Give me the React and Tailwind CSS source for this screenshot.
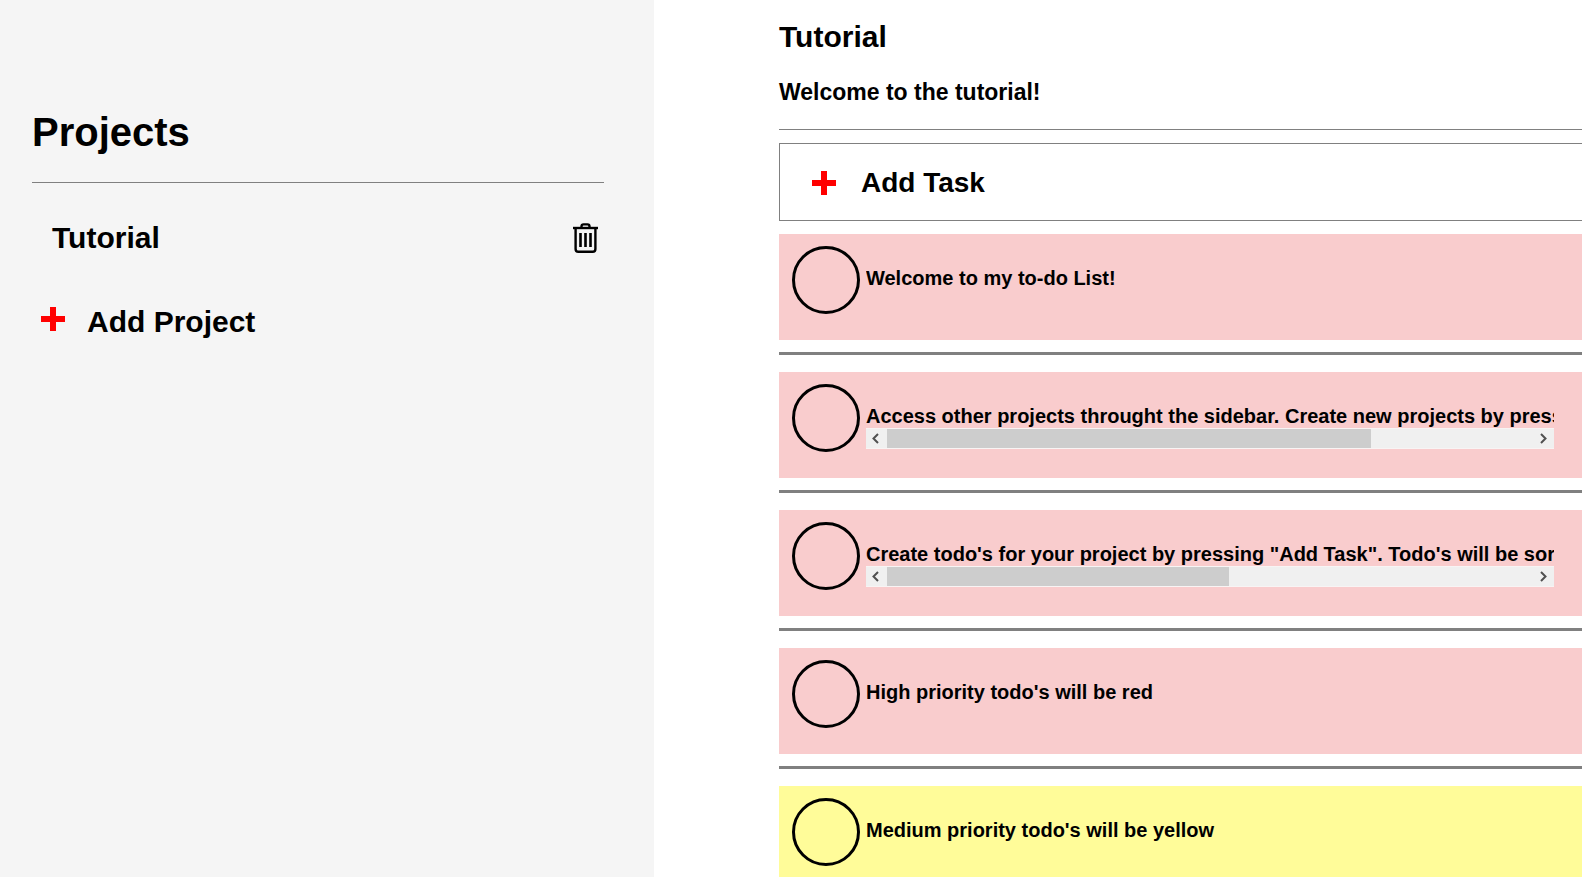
import { useRef } from "react";

const tasks = [
  { id: "welcome", title: "Welcome to my to-do List!", priority: "high" },
  {
    id: "sidebar",
    title: 'Access other projects throught the sidebar. Create new projects by pressing "Add Project".',
    priority: "high",
    thumb: 75,
  },
  {
    id: "create",
    title: 'Create todo\'s for your project by pressing "Add Task". Todo\'s will be sorted by priority.',
    priority: "high",
    thumb: 53,
  },
  { id: "red", title: "High priority todo's will be red", priority: "high" },
  { id: "yellow", title: "Medium priority todo's will be yellow", priority: "medium" },
];

const priorityColor = {
  high: "bg-[#f9cccd]",
  medium: "bg-[#fffc99]",
};

function PlusIcon({ className }) {
  return (
    <svg className={className} width="24" height="24" viewBox="0 0 24 24" stroke="#ff0000" strokeWidth="6" aria-hidden="true">
      <path d="M12 0V24M0 12H24" />
    </svg>
  );
}

function TrashIcon() {
  return (
    <svg width="25" height="30" viewBox="0 0 25 30" fill="none" stroke="black" aria-hidden="true">
      <path d="M0 5H25" strokeWidth="2.4" />
      <path d="M8.5 4.5V3.4Q8.5 1.4 10.5 1.4H14.5Q16.5 1.4 16.5 3.4V4.5" strokeWidth="2.4" />
      <path d="M2.6 5V26Q2.6 28.7 5.3 28.7H19.7Q22.4 28.7 22.4 26V5" strokeWidth="2.4" />
      <path d="M7.5 10V24M12.5 10V24M17.5 10V24" strokeWidth="2.6" />
    </svg>
  );
}

function Arrow({ d }) {
  return (
    <svg width="21" height="21" viewBox="0 0 21 21" fill="none" stroke="#505050" strokeWidth="2" aria-hidden="true">
      <path d={d} />
    </svg>
  );
}

function ScrollingTitle({ task }) {
  const box = useRef(null);
  const scroll = (amount) => box.current.scrollBy({ left: amount });
  return (
    <div className="min-w-0 flex-1">
      <div ref={box} className="overflow-hidden whitespace-nowrap">
        <label htmlFor={task.id}>{task.title}</label>
      </div>
      {task.thumb && (
        <div className="flex h-[21px] border-y border-[#f8f4f4] bg-[#f0f0f0]">
          <button type="button" aria-label="Scroll left" className="flex w-[21px] items-center" onClick={() => scroll(-40)}>
            <Arrow d="M12 6L7.5 10.5L12 15" />
          </button>
          <div className="flex-1">
            <div className="h-full bg-[#cdcdcd]" style={{ width: `${task.thumb}%` }} />
          </div>
          <button type="button" aria-label="Scroll right" className="flex w-[21px] items-center" onClick={() => scroll(40)}>
            <Arrow d="M8 6L12.5 10.5L8 15" />
          </button>
        </div>
      )}
    </div>
  );
}

function Task({ task }) {
  return (
    <li className="group">
      <div className={`flex h-[106px] gap-1.5 pr-7 pl-[13px] ${priorityColor[task.priority]}`}>
        <input
          id={task.id}
          type="checkbox"
          className="mt-3 size-[68px] shrink-0 appearance-none rounded-full border-3 border-black checked:bg-black/20"
        />
        <div className="flex min-w-0 flex-1 pt-8 text-[20px] leading-6">
          <ScrollingTitle task={task} />
        </div>
      </div>
      <hr className="mt-3 mb-[17px] border-t-3 border-[#808080] group-last:hidden" />
    </li>
  );
}

export default function App() {
  return (
    <div className="grid h-screen grid-cols-[41.34%_minmax(0,1fr)] overflow-hidden bg-white font-['Liberation_Sans',Arial,sans-serif] font-bold text-black">
      <aside className="bg-[#f5f5f5] pt-[108px] pr-[50px] pl-8">
        <h1 className="text-[40px] leading-12">Projects</h1>
        <hr className="mt-[26px] border-[#808080]" />
        <div className="mt-[35px] flex items-center justify-between pr-1.5 pl-5 text-[30px] leading-10">
          <a href="#tutorial">Tutorial</a>
          <button type="button" aria-label="Delete Tutorial">
            <TrashIcon />
          </button>
        </div>
        <button type="button" className="mt-11 flex items-center gap-[22px] pl-[9px] text-[30px] leading-10">
          <PlusIcon className="mb-1.5" />
          Add Project
        </button>
      </aside>

      <main id="tutorial" className="overflow-y-auto pt-[17px] pl-[125px]">
        <h2 className="text-[30px] leading-10">Tutorial</h2>
        <h3 className="mt-[21px] text-[23px] leading-7">Welcome to the tutorial!</h3>
        <hr className="mt-[23px] border-[#808080]" />
        <button
          type="button"
          className="mt-[13px] flex h-[78px] w-full items-center gap-[25px] border border-r-0 border-[#808080] pt-0.5 pl-8 text-[28px] leading-10"
        >
          <PlusIcon />
          Add Task
        </button>
        <ul className="mt-[13px]">
          {tasks.map((task) => (
            <Task key={task.id} task={task} />
          ))}
        </ul>
      </main>
    </div>
  );
}
